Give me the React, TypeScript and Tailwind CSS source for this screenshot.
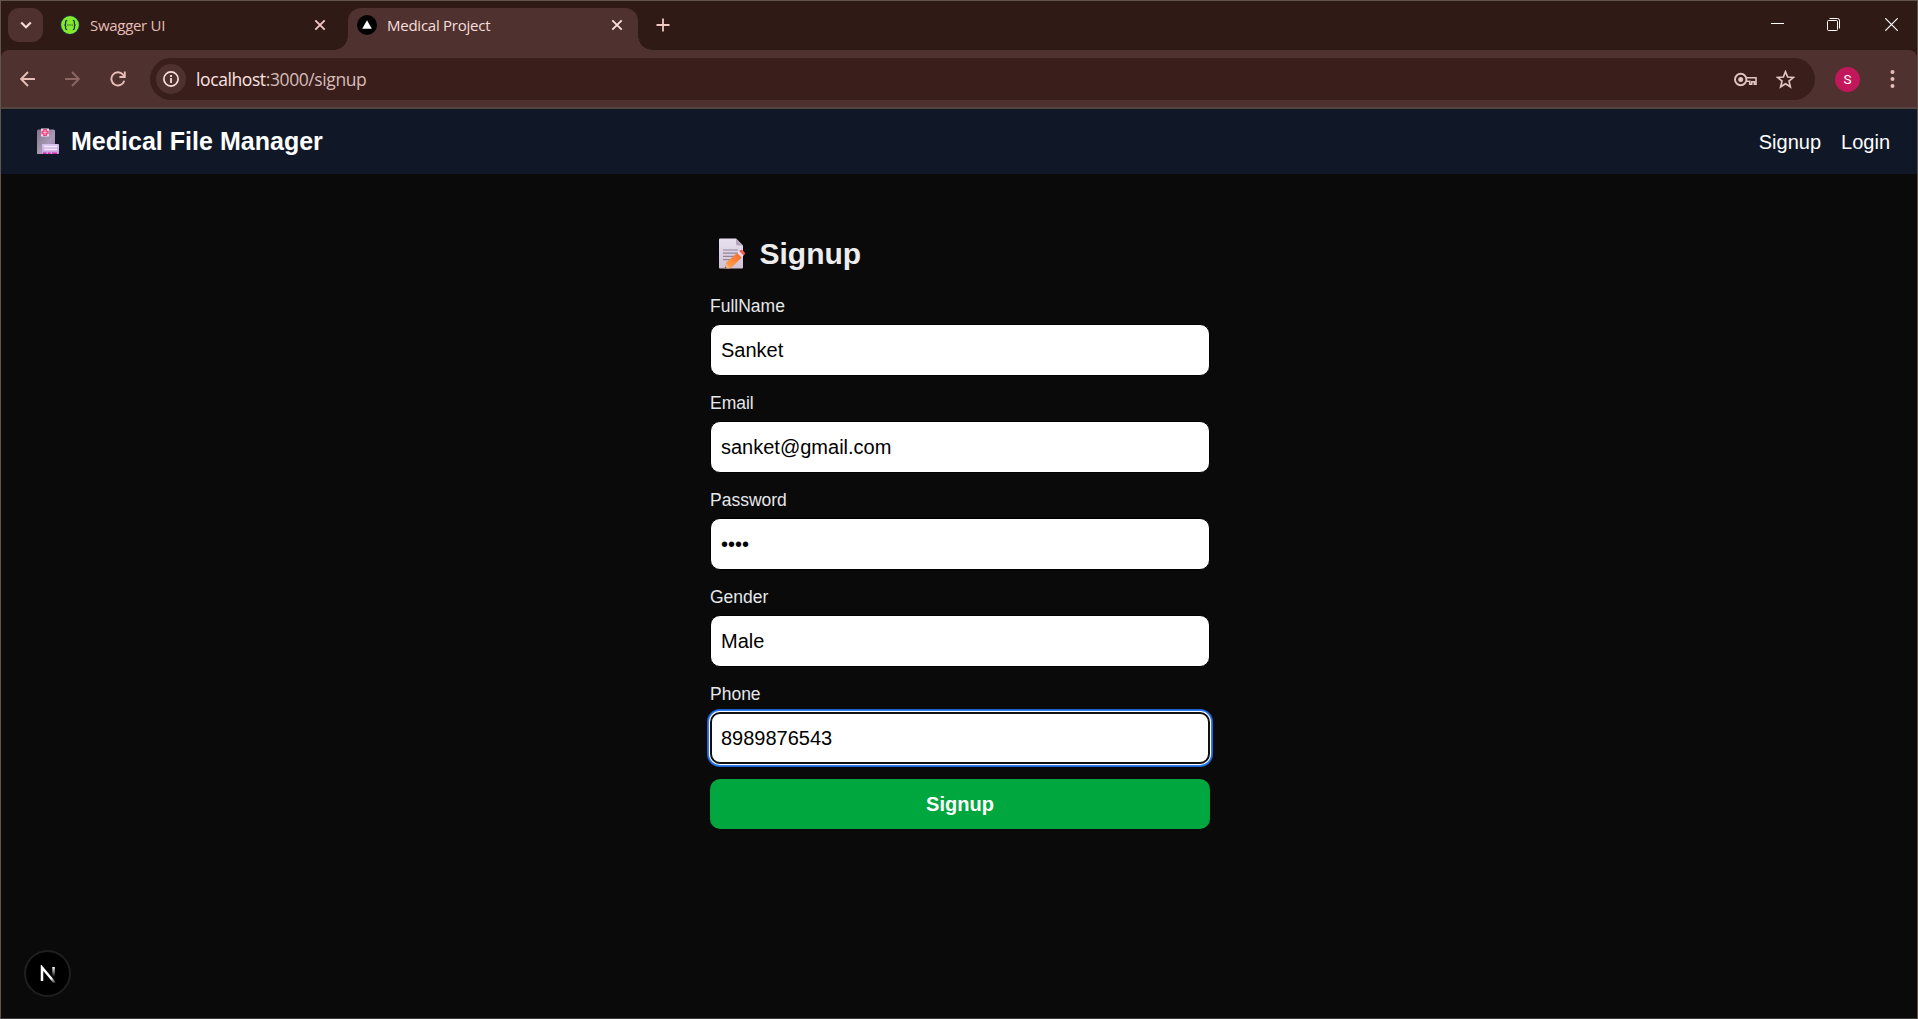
import type { ReactNode } from "react";

type IconProps = { className?: string; size?: number; children: ReactNode; box?: string };

function Icon({ className = "", size = 20, box = "0 0 24 24", children }: IconProps) {
  return (
    <svg width={size} height={size} viewBox={box} className={`shrink-0 ${className}`} fill="none">
      {children}
    </svg>
  );
}

function CloseGlyph({ className }: { className: string }) {
  return (
    <Icon size={12} box="0 0 12 12" className={className}>
      <path d="M1.300 1.300l9.400 9.400M10.700 1.300l-9.400 9.400" stroke="currentColor" strokeWidth="1.900" />
    </Icon>
  );
}

function TabStrip() {
  return (
    <div className="flex h-[49px] bg-[#301a16]">
      <button className="ml-[7px] mt-[7px] flex h-[34px] w-[35px] items-center justify-center rounded-[11px] bg-[#4f3230] text-[#f5dcd8]">
        <Icon size={12} box="0 0 12 12">
          <path d="M1.200 3.500L6 8.200l4.800-4.700" stroke="currentColor" strokeWidth="2.200" />
        </Icon>
      </button>

      <div className="ml-[17px] flex h-[48px] w-[288px] items-center text-[#e7bdb6]">
        <Icon size={20} box="0 0 20 20">
          <circle cx="10" cy="10" r="9.800" fill="#173647" />
          <circle cx="10" cy="10" r="8.900" fill="#85ea2d" />
          <path
            d="M7.200 5.300c-1.400 0-1.600.6-1.600 1.500v1.600c0 1-.3 1.600-1.200 1.600.9 0 1.200.6 1.200 1.600v1.600c0 .9.200 1.500 1.600 1.500M12.800 5.300c1.400 0 1.600.6 1.600 1.500v1.600c0 1 .3 1.600 1.200 1.600-.9 0-1.200.6-1.200 1.600v1.600c0 .9-.2 1.500-1.600 1.500"
            stroke="#173647"
            strokeWidth="1.300"
          />
          <path d="M7.200 10h1.200M9.400 10h1.200M11.600 10h1.200" stroke="#173647" strokeWidth="1.200" />
        </Icon>
        <span className="ml-[10px] flex-1 whitespace-nowrap text-[15px] tracking-[-0.3px]">Swagger UI</span>
        <CloseGlyph className="mr-[22px] text-[#f0c8c1]" />
      </div>

      <div className="relative mt-[7px] flex h-[42px] w-[290px] items-start rounded-t-[13px] bg-[#4f3230] text-[#f8ded9]">
        <span className="absolute -left-[14px] bottom-0 size-[14px] bg-[radial-gradient(circle_at_0_0,#301a16_13.500px,#4f3230_14px)]" />
        <span className="absolute -right-[14px] bottom-0 size-[14px] bg-[radial-gradient(circle_at_100%_0,#301a16_13.500px,#4f3230_14px)]" />
        <div className="flex h-[34px] w-full items-center">
          <Icon size={20} box="0 0 20 20" className="ml-[9px]">
            <circle cx="10" cy="10" r="10" fill="#000" />
            <path d="M10 5.300l4.800 8.400H5.200z" fill="#fff" />
          </Icon>
          <span className="ml-[10px] flex-1 whitespace-nowrap text-[15px] tracking-[-0.25px]">Medical Project</span>
          <CloseGlyph className="mr-[15px]" />
        </div>
      </div>

      <Icon size={14} box="0 0 14 14" className="ml-[18px] mt-[17px] text-[#f0c8c1]">
        <path d="M7 .5v13M.5 7h13" stroke="currentColor" strokeWidth="1.800" />
      </Icon>

      <div className="ml-auto mr-[19px] flex h-[47px] items-center text-white">
        <Icon size={13} box="0 0 13 13" className="mr-[43px]">
          <path d="M0 5.500h13" stroke="currentColor" strokeWidth="1" />
        </Icon>
        <Icon size={13} box="0 0 13 13" className="mr-[45px]">
          <rect x=".5" y="2.500" width="10" height="10" rx="1" stroke="currentColor" />
          <path d="M2.500 .5h8a2 2 0 0 1 2 2v8" stroke="currentColor" />
        </Icon>
        <Icon size={13} box="0 0 13 13">
          <path d="M.3 .3l12.400 12.400M12.700 .3L.3 12.700" stroke="currentColor" strokeWidth="1.200" />
        </Icon>
      </div>
    </div>
  );
}

function Toolbar() {
  return (
    <div className="bg-[#301a16]">
      <div className="flex h-[57px] items-center rounded-t-[8px] bg-[#4f3230] pt-[1px] text-[#e7bdb6]">
        <Icon size={16} box="0 0 16 16" className="ml-[19px]">
          <path d="M15 8H1.500M8 1L1.200 8 8 15" stroke="currentColor" strokeWidth="1.900" />
        </Icon>
        <Icon size={16} box="0 0 16 16" className="ml-[28px] text-[#8b6662]">
          <path d="M1 8h13.500M8 1l6.800 7L8 15" stroke="currentColor" strokeWidth="1.900" />
        </Icon>
        <Icon size={16} box="0 0 16 16" className="ml-[30px]">
          <path d="M14.300 9.800A6.600 6.600 0 1 1 13 3.600l1.800 1.900" stroke="currentColor" strokeWidth="1.900" />
          <path d="M14.800 .5v5.500H9.400" stroke="currentColor" strokeWidth="1.900" />
        </Icon>

        <div className="ml-[24px] flex h-[42px] flex-1 items-center rounded-full bg-[#3a1e1b] pl-[6px] pr-5">
          <span className="flex size-[30px] items-center justify-center rounded-full bg-[#4f3230] text-[#f8ded9]">
            <Icon size={16} box="0 0 16 16">
              <circle cx="8" cy="8" r="7.100" stroke="currentColor" strokeWidth="1.700" />
              <path d="M8 7v5M8 4v1.900" stroke="currentColor" strokeWidth="1.800" />
            </Icon>
          </span>
          <span className="ml-[10px] whitespace-nowrap text-[17.500px] tracking-[-0.400px] text-[#d6bdb9]">
            <span className="text-[#fbe4e0]">localhost</span>:3000/signup
          </span>
          <Icon size={23} box="0 0 23 14" className="ml-auto text-[#dfc4bf]">
            <circle cx="6.700" cy="7" r="5.700" stroke="currentColor" strokeWidth="1.900" />
            <circle cx="6.700" cy="7" r="2.500" fill="currentColor" />
            <path d="M12 5.200h10v6.600h-1.700V9.300h-2.600v2.500h-2V8.800H12" stroke="currentColor" strokeWidth="1.600" />
          </Icon>
          <Icon size={19} box="0 0 19 19" className="ml-[19px] text-[#dfc4bf]">
            <path
              d="M9.500 1.700l2.150 5.300 5.700.45-4.350 3.700 1.350 5.650-4.850-3.050-4.850 3.050 1.350-5.650L1.650 7.450l5.700-.45z"
              stroke="currentColor"
              strokeWidth="1.700"
            />
          </Icon>
        </div>

        <span className="ml-[20px] flex size-[25px] items-center justify-center rounded-full bg-[#c2185b] font-[Roboto] text-[13.5px] text-white">
          S
        </span>
        <Icon size={20} box="0 0 20 20" className="ml-[22px] mr-[15px]">
          <circle cx="10.500" cy="3" r="2" fill="currentColor" />
          <circle cx="10.500" cy="10" r="2" fill="currentColor" />
          <circle cx="10.500" cy="17" r="2" fill="currentColor" />
        </Icon>
      </div>
    </div>
  );
}

function HospitalIcon() {
  return (
    <svg width="24" height="27" viewBox="0 0 24 27" className="shrink-0">
      <defs>
        <linearGradient id="tower" x1="0" y1="0" x2="1" y2="1">
          <stop offset="0" stopColor="#85758f" />
          <stop offset=".6" stopColor="#a99bb5" />
          <stop offset="1" stopColor="#9a63ad" />
        </linearGradient>
        <linearGradient id="wing" x1="0" y1="0" x2="0" y2="1">
          <stop offset="0" stopColor="#d9c3f2" />
          <stop offset="1" stopColor="#c79be0" />
        </linearGradient>
      </defs>
      <path d="M1 3q0-1.500 1.500-1.500h15q1.500 0 1.500 1.500V26H1z" fill="url(#tower)" />
      <rect x="5" y=".5" width="8" height="8" fill="#f6dcec" />
      <path
        d="M7.800 1.500h2.400v1.800H12v2.400h-1.800v1.800H7.800V5.700H6V3.300h1.800z"
        fill="#f9a9c6"
        stroke="#ec3f7c"
        strokeWidth="1.200"
      />
      <rect x="6" y="16" width="17" height="10" rx="1" fill="url(#wing)" />
      <path d="M8 18.500h13M8 21.500h13" stroke="#f4eaff" strokeWidth="1.300" />
      <path d="M7 25.200h3.500M12 25.200h2.500M16 25.200h5" stroke="#d42aa4" strokeWidth="1.600" />
    </svg>
  );
}

function MemoIcon() {
  return (
    <svg width="28" height="32" viewBox="0 0 28 32" className="shrink-0">
      <defs>
        <linearGradient id="paper" x1="0" y1="0" x2="0" y2="1">
          <stop offset="0" stopColor="#e9e1ee" />
          <stop offset="1" stopColor="#cfc0d6" />
        </linearGradient>
        <linearGradient id="pencil" x1="0" y1="1" x2="1" y2="0">
          <stop offset="0" stopColor="#ffab4a" />
          <stop offset="1" stopColor="#f4682f" />
        </linearGradient>
      </defs>
      <path d="M0 1.500q0-1 1-1h16L24 7.500v22q0 1-1 1H1q-1 0-1-1z" fill="url(#paper)" />
      <path d="M17 .5l7 7h-5.500Q17 7.500 17 6z" fill="#b5a5bd" />
      <path d="M4 12h15M4 15.200h15M4 18.400h11M4 21.600h8" stroke="#8f8595" strokeWidth="1.200" />
      <path d="M7.300 24.500L18.300 14.800l4.500 4.800L12 30l-6.500.5z" fill="url(#pencil)" />
      <path d="M7.300 25.500l4 4.800-5.800.2z" fill="#e8b58d" />
      <path d="M5.500 30.500l.7-2 1.700 1.900z" fill="#5b4650" />
      <path d="M18.300 14.800l2-1.800 4.300 4.800-1.800 1.800z" fill="#e8dfee" />
      <path d="M20.300 13l1.300-1q1-.7 2 .2l1.900 2.100q.9 1.100 0 2.100l-.9 1.400z" fill="#fb5a55" />
    </svg>
  );
}

function NavBar() {
  return (
    <nav className="flex h-[65px] items-center justify-between bg-[#101828] pl-[35px] pr-[27px] text-white">
      <div className="flex items-center">
        <HospitalIcon />
        <h1 className="ml-[11px] text-[25px] font-bold leading-[35px] tracking-[0.02px]">Medical File Manager</h1>
      </div>
      <div className="flex gap-5 text-[20px] leading-[30px]">
        <a>Signup</a>
        <a>Login</a>
      </div>
    </nav>
  );
}

const fields = [
  { label: "FullName", value: "Sanket" },
  { label: "Email", value: "sanket@gmail.com" },
  { label: "Password", value: "••••" },
  { label: "Gender", value: "Male" },
  { label: "Phone", value: "8989876543", focused: true },
];

function SignupForm() {
  return (
    <main className="mx-auto w-[502px] pl-0.5 pt-[60px]">
      <h2 className="mb-5 flex h-10 items-center pl-[9px] text-[30px] font-bold leading-[40px] text-[#ededed]">
        <MemoIcon />
        <span className="ml-[12.5px]">Signup</span>
      </h2>
      <form className="flex flex-col gap-[15px]">
        {fields.map((f) => (
          <div key={f.label} className="flex flex-col gap-[5px]">
            <label className="text-[17.5px] leading-[25px] text-[#e5e7eb]">{f.label}</label>
            <div
              className={
                f.focused
                  ? "h-[52px] rounded-[10px] border-2 border-[#101010] bg-white px-[9px] text-[20px] leading-[48px] text-black shadow-[0_0_0_1px_#fff,0_0_0_2px_#2f7df0,0_0_0_3px_#1a62d6]"
                  : "h-[52px] rounded-[10px] border border-black bg-white px-[10px] text-[20px] leading-[50px] text-black"
              }
            >
              {f.value}
            </div>
          </div>
        ))}
        <button type="button" className="h-[50px] rounded-[10px] bg-[#00a63e] text-[20px] font-bold text-white">
          Signup
        </button>
      </form>
    </main>
  );
}

function DevBadge() {
  return (
    <div className="absolute bottom-[21px] left-[23px] flex size-[47px] items-center justify-center rounded-full border-2 border-[#1f1f1f] bg-black">
      <svg width="18" height="18" viewBox="0 0 18 18" fill="none">
        <defs>
          <linearGradient id="stem" x1="0" y1="0" x2="0" y2="1">
            <stop offset="0" stopColor="#fff" />
            <stop offset="1" stopColor="#fff" stopOpacity="0" />
          </linearGradient>
          <linearGradient id="slash" x1="0" y1="0" x2="1" y2="1">
            <stop offset=".7" stopColor="#fff" />
            <stop offset="1" stopColor="#fff" stopOpacity=".1" />
          </linearGradient>
        </defs>
        <path d="M3 16V2.500L16 18" stroke="url(#slash)" strokeWidth="2.500" />
        <rect x="13.300" y="2" width="2.500" height="10" fill="url(#stem)" />
      </svg>
    </div>
  );
}

export default function App() {
  return (
    <div className="relative flex h-[1019px] w-[1918px] flex-col overflow-hidden border border-[#62534f] border-b-[#3c3c3c] bg-[#0a0a0a] font-['Liberation_Sans',Arial,sans-serif]">
      <header className="border-b-2 border-[#534440] font-['Open_Sans','Noto_Sans',sans-serif]">
        <TabStrip />
        <Toolbar />
      </header>
      <NavBar />
      <SignupForm />
      <DevBadge />
    </div>
  );
}
